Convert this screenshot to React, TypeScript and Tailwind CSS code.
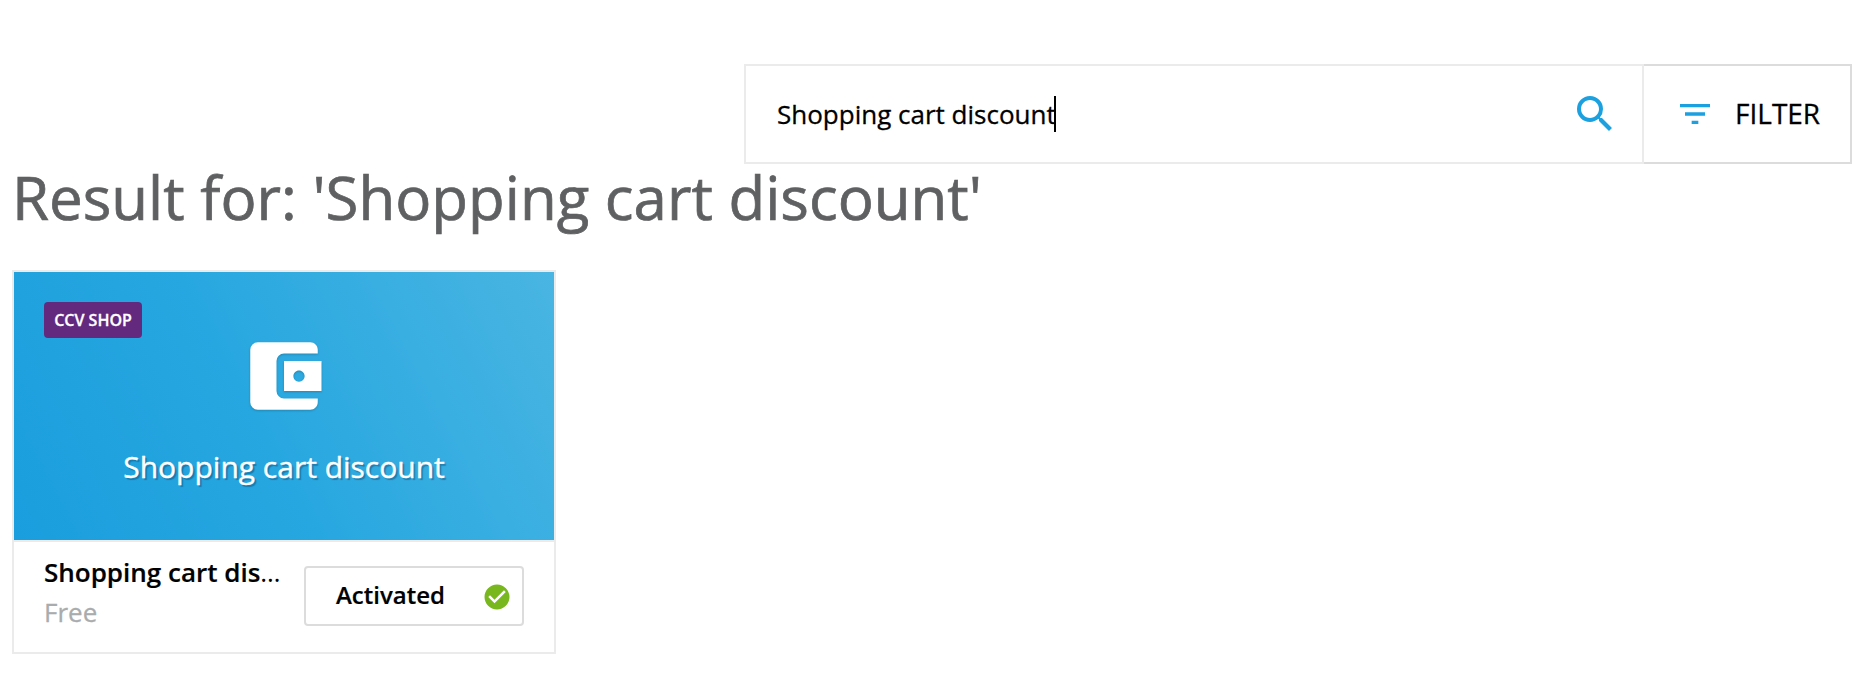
import { MdSearch, MdFilterList, MdAccountBalanceWallet, MdCheckCircle } from 'react-icons/md';

interface App {
  name: string;
  price: string;
  vendor: string;
}

const QUERY = 'Shopping cart discount';

const APPS: App[] = [{ name: 'Shopping cart discount', price: 'Free', vendor: 'CCV SHOP' }];

function SearchBar() {
  return (
    <div className="ml-[744px] flex h-[100px] w-[1108px]">
      <div className="flex w-[900px] items-center border-2 border-[#ebebeb] pl-[31px] pr-[23px]">
        <span className="-mt-px whitespace-nowrap text-[26px] leading-9 text-black [-webkit-text-stroke:0.3px]">
          {QUERY}
        </span>
        {/* Text caret */}
        <span className="-ml-[2px] h-9 w-[2px] bg-black" />
        <MdSearch className="ml-auto size-12 text-[#1ba1df]" />
      </div>
      <button className="flex flex-1 items-center border-2 border-l-0 border-[#dcdcdc] pl-[31px] text-[28px] text-black">
        <MdFilterList className="size-10 shrink-0 text-[#1ba1df]" />
        <span className="-mt-[3px] ml-[20px] [-webkit-text-stroke:0.3px]">FILTER</span>
      </button>
    </div>
  );
}

function AppCard({ app }: { app: App }) {
  return (
    <div className="h-[384px] w-[544px] border-2 border-[#ebebeb]">
      <div className="flex h-[268px] flex-col bg-[linear-gradient(62deg,#1a9edd_0%,#27a7e0_45%,#49b5e2_100%)] pt-[30px]">
        <span className="ml-[30px] flex h-9 w-[98px] shrink-0 items-center justify-center rounded bg-[#63297f] text-[16px] font-semibold text-white [-webkit-text-stroke:0.3px]">
          {app.vendor}
        </span>
        <MdAccountBalanceWallet className="-mt-[7px] ml-[225px] size-[90px] shrink-0 text-white drop-shadow-[0_1px_1px_rgba(0,0,0,0.2)]" />
        <span className="mt-[26px] text-center text-[30px] leading-10 text-white [-webkit-text-stroke:0.4px] [text-shadow:2px_2px_1px_rgba(0,60,100,0.4)]">
          {app.name}
        </span>
      </div>

      <div className="flex h-[112px] border-t-2 border-[#ebebeb] pl-[30px]">
        <div className="w-[240px] pt-[10px]">
          {/* Weight sits on the inner span so the ellipsis stays regular */}
          <div className="truncate text-[26px] leading-10 text-black">
            <span className="font-semibold [-webkit-text-stroke:0.2px]">{app.name}</span>
          </div>
          <div className="text-[26px] leading-10 text-[#a9acad] [-webkit-text-stroke:0.3px]">{app.price}</div>
        </div>
        <button className="ml-[20px] mt-[24px] flex h-[60px] w-[220px] items-center rounded border-2 border-[#dcdcdc] pl-[30px] pr-[10px] text-[24px] font-semibold text-black">
          <span className="-mt-[2px] [-webkit-text-stroke:0.2px]">Activated</span>
          <MdCheckCircle className="ml-auto mt-[2px] size-[30px] text-[#78b71e]" />
        </button>
      </div>
    </div>
  );
}

export default function App() {
  return (
    <main className="h-[686px] overflow-hidden bg-white pt-16 font-['Open_Sans',sans-serif]">
      <SearchBar />
      <h1 className="-mt-[2px] ml-3 h-[108px] whitespace-nowrap text-[60px] leading-[70px] text-[#5f6062] [-webkit-text-stroke:0.7px]">
        Result for: '{QUERY}'
      </h1>
      <div className="ml-3 flex gap-6">
        {APPS.map((app) => (
          <AppCard key={app.name} app={app} />
        ))}
      </div>
    </main>
  );
}
